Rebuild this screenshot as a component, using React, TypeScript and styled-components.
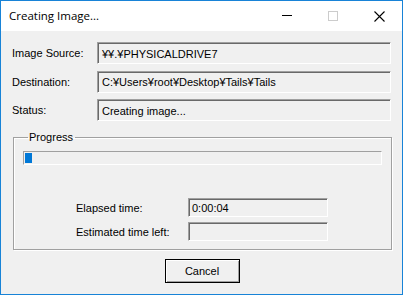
import React, { FC } from "react";
import styled, { createGlobalStyle } from "styled-components";

const GlobalStyle = createGlobalStyle`
  html, body {
    margin: 0;
    padding: 0;
    background: #ffffff;
  }
`;

const App: FC = () => {
  return (
    <>
      <GlobalStyle />
      <Window>
        <TitleBar>
          <Title>Creating Image...</Title>
          <Caption>
            <CaptionButton>
              <svg width="10" height="10" viewBox="0 0 10 10">
                <rect x="0" y="4" width="10" height="1" fill="#000" />
              </svg>
            </CaptionButton>
            <CaptionButton>
              <svg width="10" height="10" viewBox="0 0 10 10">
                <rect x="0.5" y="0.5" width="9" height="9" fill="none" stroke="#cccccc" />
              </svg>
            </CaptionButton>
            <CaptionButton>
              <svg width="11" height="11" viewBox="0 0 11 11">
                <path d="M0.5 0.5 L10.5 10.5 M10.5 0.5 L0.5 10.5" stroke="#000" strokeWidth="1.1" />
              </svg>
            </CaptionButton>
          </Caption>
        </TitleBar>
        <Client>
          <Fields>
            <Label>Image Source:</Label>
            <Edit>¥¥.¥PHYSICALDRIVE7</Edit>
            <Label>Destination:</Label>
            <Edit>C:¥Users¥root¥Desktop¥Tails¥Tails</Edit>
            <Label>Status:</Label>
            <Edit>Creating image...</Edit>
          </Fields>
          <Group>
            <Legend>Progress</Legend>
            <Bar>
              <BarFill style={{ width: 7 }} />
            </Bar>
            <Times>
              <TimeLabel>Elapsed time:</TimeLabel>
              <TimeBox>0:00:04</TimeBox>
              <TimeLabel>Estimated time left:</TimeLabel>
              <TimeBox />
            </Times>
          </Group>
          <Footer>
            <Button>Cancel</Button>
          </Footer>
        </Client>
      </Window>
    </>
  );
};

export default App;

const Window = styled.div`
  width: 403px;
  height: 295px;
  box-sizing: border-box;
  border: 1px solid #1883d7;
  display: flex;
  flex-direction: column;
  font-family: "Liberation Sans", Arial, sans-serif;
  font-size: 11px;
  color: #000;
`;

const TitleBar = styled.div`
  height: 30px;
  background: #ffffff;
  display: flex;
  align-items: flex-start;
  justify-content: space-between;
`;

const Title = styled.span`
  font-family: "Open Sans", "Noto Sans", sans-serif;
  font-size: 11.5px;
  padding: 7px 0 0 8px;
`;

const Caption = styled.div`
  display: flex;
`;

const CaptionButton = styled.div`
  width: 46px;
  height: 29px;
  display: flex;
  align-items: center;
  justify-content: center;
  padding-top: 1px;
  box-sizing: border-box;
`;

const Client = styled.div`
  flex: 1;
  background: #f0f0f0;
  display: flex;
  flex-direction: column;
  padding: 11px 11px 0 11px;
`;

const Fields = styled.div`
  display: grid;
  grid-template-columns: 85px 294px;
  grid-auto-rows: 22px;
  row-gap: 6.5px;
  align-items: center;
`;

const Label = styled.span`
  padding-left: 0;
`;

const Edit = styled.div`
  height: 22px;
  box-sizing: border-box;
  border-top: 1px solid #a0a0a0;
  border-left: 1px solid #a0a0a0;
  border-right: 1px solid #ffffff;
  border-bottom: 1px solid #ffffff;
  box-shadow: inset 1px 1px 0 #696969;
  display: flex;
  align-items: center;
  padding-left: 4px;
  padding-top: 1px;
  white-space: nowrap;
`;

const Group = styled.fieldset`
  margin: 10px 0 0 1px;
  width: 379px;
  height: 119px;
  box-sizing: border-box;
  border: 1px solid #a0a0a0;
  box-shadow: inset 1px 1px 0 #ffffff, 1px 1px 0 #ffffff;
  padding: 8px 9px 0 9px;
`;

const Legend = styled.legend`
  padding: 0 2px 0 1px;
  margin-left: 5px;
  font-size: 11px;
`;

const Bar = styled.div`
  height: 14px;
  box-sizing: border-box;
  border-top: 1px solid #a0a0a0;
  border-left: 1px solid #a0a0a0;
  border-right: 1px solid #ffffff;
  border-bottom: 1px solid #ffffff;
  padding: 1px;
`;

const BarFill = styled.div`
  height: 100%;
  background: #0078d7;
`;

const Times = styled.div`
  display: grid;
  grid-template-columns: 112px 140px;
  grid-template-rows: 19px 19px;
  row-gap: 5px;
  align-items: center;
  margin: 33px 0 0 53px;
`;

const TimeLabel = styled.span``;

const TimeBox = styled(Edit)`
  height: 19px;
  padding-left: 3px;
`;

const Footer = styled.div`
  display: flex;
  justify-content: center;
  padding-top: 9px;
`;

const Button = styled.button`
  width: 75px;
  height: 24px;
  box-sizing: border-box;
  background: #f0f0f0;
  border: 1px solid #000;
  box-shadow: inset 1px 1px 0 #ffffff, inset -1px -1px 0 #a0a0a0;
  font-family: "Liberation Sans", Arial, sans-serif;
  font-size: 11px;
  color: #000;
  padding: 0;
  margin-left: 1px;
`;
